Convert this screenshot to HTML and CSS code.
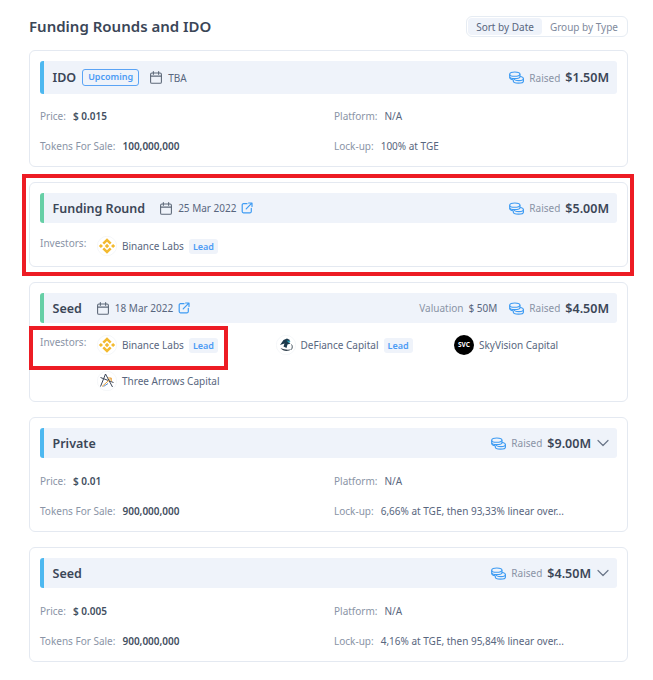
FILE: index.html
```html
<!DOCTYPE html>
<html lang="en">
<head>
<meta charset="utf-8">
<title>Funding Rounds and IDO</title>
<link rel="stylesheet" href="styles.css">
</head>
<body>
<svg class="defs" width="0" height="0" aria-hidden="true">
  <defs>
    <symbol id="cal" viewBox="0.9 0.5 12.2 13"><rect x="1.5" y="2.5" width="11" height="10.4" rx="1.4" fill="none" stroke="currentColor" stroke-width="1.1"/><path d="M1.5 5.6h11M4.3 1v2.8M9.7 1v2.8" fill="none" stroke="currentColor" stroke-width="1.1" stroke-linecap="round"/></symbol>
    <symbol id="ext" viewBox="0 0 12 12"><path d="M6 1.7H2.4a1.2 1.2 0 0 0-1.2 1.2v6.7a1.2 1.2 0 0 0 1.2 1.2h6.7a1.2 1.2 0 0 0 1.2-1.2V6.3M5.2 6.8 10.8 1.2M7.6 1h3.4v3.4" fill="none" stroke="currentColor" stroke-width="1.2" stroke-linecap="round" stroke-linejoin="round"/></symbol>
    <symbol id="coins" viewBox="0 0 16 13"><g fill="none" stroke="currentColor" stroke-width="1.2"><ellipse cx="6.2" cy="2.9" rx="5.5" ry="2.3"/><path d="M.7 2.9v2.4c0 1.3 2.5 2.3 5.5 2.3s5.5-1 5.5-2.3V2.9"/><path d="M.8 5.8C.6 7.5 2 8.6 4.4 8.9M11.7 5.4c2.2.3 3.7 1.1 3.7 2.2 0 1.3-2.2 2.2-4.8 2.2S5.6 9 5.4 7.8"/><path d="M4.6 8.6v1.9c0 1.2 2.4 2 5.4 2s5.4-.9 5.4-2.1V7.6"/></g></symbol>
    <symbol id="chev" viewBox="0 0 12 8"><path d="M1 1.5 6 6.5 11 1.5" fill="none" stroke="currentColor" stroke-width="1.2" stroke-linecap="round" stroke-linejoin="round"/></symbol>
    <symbol id="binance" viewBox="0 0 20 20"><circle cx="10" cy="10" r="9.7" fill="#fff" stroke="#eef1f5" stroke-width=".6"/><g fill="#f3ba2f"><path d="M10 2.2 14.6 6.8 12.8 8.6 10 5.8 7.2 8.6 5.4 6.8Z"/><path d="M10 17.8 5.4 13.2 7.2 11.4 10 14.2 12.8 11.4 14.6 13.2Z"/><path d="M1.8 10 3.9 7.9 6 10 3.9 12.1Z"/><path d="M14 10 16.1 7.9 18.2 10 16.1 12.1Z"/><path d="M10 7.8 12.2 10 10 12.2 7.8 10Z"/></g></symbol>
  </defs>
</svg>
<main class="panel">
  <header class="top">
    <h2 class="title">Funding Rounds and IDO</h2>
    <div class="tabs"><span class="tab tab-on">Sort by Date</span><span class="tab">Group by Type</span></div>
  </header>

  <section class="card">
    <div class="bar bar-blue">
      <span class="name">IDO</span><span class="pill">Upcoming</span>
      <svg class="ic-cal ic-cal-far"><use href="#cal"/></svg><span class="date">TBA</span>
      <span class="right"><svg class="ic-coins"><use href="#coins"/></svg><span class="muted raised">Raised</span><b class="amount">$1.50M</b></span>
    </div>
    <div class="facts">
      <div class="fact"><span class="muted">Price:</span><b>$ 0.015</b></div>
      <div class="fact"><span class="muted">Platform:</span><span>N/A</span></div>
      <div class="fact"><span class="muted">Tokens For Sale:</span><b>100,000,000</b></div>
      <div class="fact"><span class="muted">Lock-up:</span><span>100% at TGE</span></div>
    </div>
  </section>

  <section class="card card-inv">
    <div class="bar bar-green">
      <span class="name name-gap">Funding Round</span>
      <svg class="ic-cal"><use href="#cal"/></svg><span class="date">25 Mar 2022</span><svg class="ic-ext"><use href="#ext"/></svg>
      <span class="right"><svg class="ic-coins"><use href="#coins"/></svg><span class="muted raised">Raised</span><b class="amount">$5.00M</b></span>
    </div>
    <div class="investors">
      <span class="muted inv-label">Investors:</span>
      <div class="inv-grid">
        <div class="inv"><svg class="logo"><use href="#binance"/></svg><span>Binance Labs</span><span class="lead">Lead</span></div>
      </div>
    </div>
  </section>

  <section class="card card-inv card-seed">
    <div class="bar bar-green">
      <span class="name name-gap">Seed</span>
      <svg class="ic-cal"><use href="#cal"/></svg><span class="date">18 Mar 2022</span><svg class="ic-ext"><use href="#ext"/></svg>
      <span class="right"><span class="muted">Valuation</span><span class="val">$ 50M</span><svg class="ic-coins"><use href="#coins"/></svg><span class="muted raised">Raised</span><b class="amount">$4.50M</b></span>
    </div>
    <div class="investors">
      <span class="muted inv-label">Investors:</span>
      <div class="inv-grid">
        <div class="inv"><svg class="logo"><use href="#binance"/></svg><span>Binance Labs</span><span class="lead">Lead</span></div>
        <div class="inv">
          <svg class="logo" viewBox="0 0 20 20"><circle cx="10" cy="10" r="9.7" fill="#fff" stroke="#eef1f5" stroke-width=".6"/><path d="M4 10 7.5 5 11 3.5 14 5 12.5 7 14.5 8.5 11.5 9.5 10.5 13 7.5 11.5 8.5 8.5Z" fill="#1d3a4c"/><path d="M10.5 5.5 14.5 6 13 8Z" fill="#2a9fb8"/><path d="M4.5 13C7 16.5 12 17 16 14 13 15 9 15 4.5 13Z" fill="#33424e"/><path d="M15.5 9.5C16.5 11 16.5 12.5 15.5 14.5" fill="none" stroke="#33424e" stroke-width=".9"/></svg>
          <span>DeFiance Capital</span><span class="lead">Lead</span>
        </div>
        <div class="inv">
          <svg class="logo" viewBox="0 0 20 20"><circle cx="10" cy="10" r="10" fill="#000"/><text class="svc" x="10" y="11.8" text-anchor="middle">SVC</text></svg>
          <span>SkyVision Capital</span>
        </div>
        <div class="inv">
          <svg class="logo" viewBox="0 0 20 20"><circle cx="10" cy="10" r="9.7" fill="#fff" stroke="#eef1f5" stroke-width=".6"/><g fill="none" stroke-width="1"><path d="M3.5 15.5 8.5 3M8.5 3 15.5 16" stroke="#3c4658"/><path d="M3.5 6.5 16.5 11.5" stroke="#3c4658"/><path d="M5 15.5 14 7.5" stroke="#e6a23c"/><path d="M11 7 14.3 7 14.3 10.3" stroke="#e6a23c"/><path d="M6.5 15.5 11 12.5" stroke="#5b8fd0"/></g></svg>
          <span>Three Arrows Capital</span>
        </div>
      </div>
    </div>
  </section>

  <section class="card card-private">
    <div class="bar bar-blue">
      <span class="name">Private</span>
      <span class="right"><svg class="ic-coins"><use href="#coins"/></svg><span class="muted raised">Raised</span><b class="amount">$9.00M</b><svg class="ic-chev"><use href="#chev"/></svg></span>
    </div>
    <div class="facts">
      <div class="fact"><span class="muted">Price:</span><b>$ 0.01</b></div>
      <div class="fact"><span class="muted">Platform:</span><span>N/A</span></div>
      <div class="fact"><span class="muted">Tokens For Sale:</span><b>900,000,000</b></div>
      <div class="fact"><span class="muted">Lock-up:</span><span>6,66% at TGE, then 93,33% linear over...</span></div>
    </div>
  </section>

  <section class="card card-private">
    <div class="bar bar-blue">
      <span class="name">Seed</span>
      <span class="right"><svg class="ic-coins"><use href="#coins"/></svg><span class="muted raised">Raised</span><b class="amount">$4.50M</b><svg class="ic-chev"><use href="#chev"/></svg></span>
    </div>
    <div class="facts">
      <div class="fact"><span class="muted">Price:</span><b>$ 0.005</b></div>
      <div class="fact"><span class="muted">Platform:</span><span>N/A</span></div>
      <div class="fact"><span class="muted">Tokens For Sale:</span><b>900,000,000</b></div>
      <div class="fact"><span class="muted">Lock-up:</span><span>4,16% at TGE, then 95,84% linear over...</span></div>
    </div>
  </section>
</main>
<div class="mark mark-big"></div>
<div class="mark mark-small"></div>
</body>
</html>
```
FILE: styles.css
```css
* { box-sizing: border-box; }
html, body { margin: 0; background: #fff; }
body {
  position: relative;
  height: 680px;
  overflow: hidden;
  font-family: "Noto Sans", "Open Sans", sans-serif;
  font-size: 10px;
  color: #58667e;
}
.defs { position: absolute; }
.panel { padding: 16px 25px 0 29px; }
.top { display: flex; justify-content: space-between; align-items: center; height: 21px; margin-bottom: 13px; }
.title { margin: 0; font-size: 15px; font-weight: 600; color: #3b4657; line-height: 21px; }
.tabs { display: flex; height: 21px; padding: 1px; border: 1px solid #e6ecf3; border-radius: 6px; font-size: 10px; }
.tab { display: flex; align-items: center; padding: 0 8px; border-radius: 4px; color: #808a9d; }
.tab-on { background: #eff3fa; color: #58667e; }

.card { height: 117px; margin-bottom: 15px; padding: 10px; border: 1px solid #e4e9f1; border-radius: 6px; }
.card-inv { height: 85px; }
.card-seed { height: 120px; }
.card-private { height: 115px; }

.bar { display: flex; align-items: center; height: 33px; padding-left: 8.5px; padding-right: 8px; background: #eff3fa; border-radius: 3px; border-left: 4px solid; }
.card-inv .bar, .card-private .bar { height: 30px; }
.bar-blue { border-left-color: #4db8f0; }
.bar-green { border-left-color: #66cfa6; }
.name { font-size: 12.5px; font-weight: 600; color: #3b4657; }
.name-gap { margin-right: 15px; }
.pill { margin-left: 6px; padding: 0 5px; height: 17px; line-height: 14px; border: 1px solid #5ba4f5; border-radius: 3px; color: #4c9bf5; font-size: 9px; font-weight: 600; }
.ic-cal { width: 12px; height: 13px; color: #5d6878; margin-right: 6px; flex: none; }
.ic-cal-far { margin-left: 11px; }
.date { font-size: 10px; color: #58667e; }
.ic-ext { width: 12px; height: 12px; margin-left: 5px; color: #3f9cf3; flex: none; }
.right { margin-left: auto; display: flex; align-items: center; }
.ic-coins { width: 15px; height: 13px; margin-right: 5px; color: #3f9cf3; }
.raised { font-size: 10px; margin-right: 5px; }
.amount { font-size: 12.5px; font-weight: 600; color: #3b4657; }
.val { margin-left: 5px; margin-right: 12px; }
.ic-chev { width: 12px; height: 8px; margin-left: 6px; color: #6b7688; }

.muted { color: #8a94a6; }
.facts { display: grid; grid-template-columns: 294px 1fr; grid-auto-rows: 30px; padding-top: 7px; }
.card-private .facts { padding-top: 8px; }
.fact { display: flex; align-items: center; gap: 7px; height: 30px; white-space: nowrap; }
.fact b { font-weight: 600; color: #434f61; }

.investors { display: flex; padding-top: 13px; }
.card-seed .investors { padding-top: 12px; }
.inv-label { width: 57px; flex: none; line-height: 20px; margin-top: -3px; height: 20px; }
.inv-grid { display: grid; grid-template-columns: repeat(3, 178.5px); row-gap: 16px; }
.inv { display: flex; align-items: center; height: 20px; white-space: nowrap; }
.logo { width: 20px; height: 20px; margin-right: 5px; flex: none; }
.svc { font-size: 6.5px; font-weight: 700; fill: #fff; }
.lead { margin-left: 5px; padding: 0 4px; height: 15px; line-height: 15px; background: #eff3fa; border-radius: 3px; color: #4c9bf5; font-size: 9px; font-weight: 600; }

.mark { position: absolute; border: 4px solid #ed1c24; pointer-events: none; }
.mark-big { left: 22px; top: 174px; width: 612px; height: 102px; }
.mark-small { left: 29px; top: 326px; width: 199px; height: 44px; }
```
